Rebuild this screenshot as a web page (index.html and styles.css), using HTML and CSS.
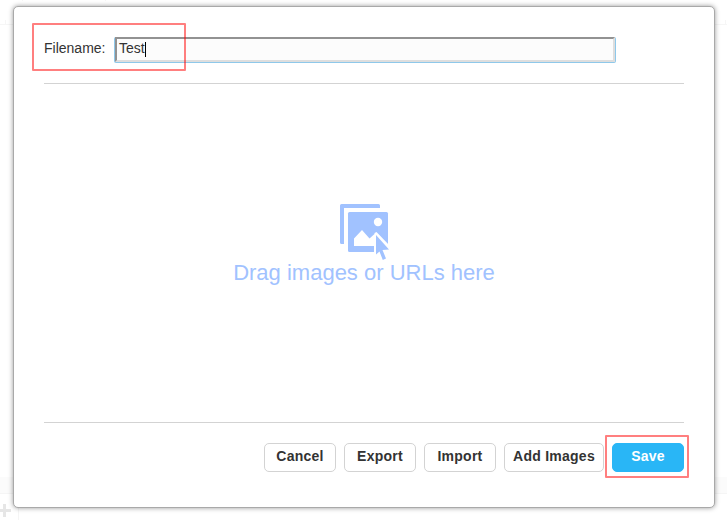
FILE: index.html
```
<!DOCTYPE html>
<html lang="en">
<head>
<meta charset="utf-8">
<title>Test</title>
<link rel="stylesheet" href="styles.css">
</head>
<body>
<svg class="backdrop" width="727" height="520" aria-hidden="true">
  <path d="M0 24.500H13M715 24.500h12M5.500 20v4M725.500 20v4M22.500 0v1M105.500 0v1" stroke="#f6f6f6"/>
  <path d="M0 477h727v16H0z" fill="#fbfbfb"/>
  <path d="M0 493.500H727M18.500 494v26" stroke="#f5f5f5"/>
  <path d="M-2 510.500H11M4.500 504v13" stroke="#e6e6e6" stroke-width="3"/>
</svg>
<main class="dialog">
  <div class="file-row">
    <label>Filename:</label>
    <div class="field" role="textbox"><span>Test</span><i class="caret"></i></div>
    <span class="highlight highlight-name"></span>
  </div>
  <section class="drop">
    <svg width="50" height="58" viewBox="0 0 50 58" aria-hidden="true">
      <path fill="#a1c2ff" d="M1.500 0H38.500Q40 0 40 1.500V4H4V40H1.500Q0 40 0 38.500V1.500Q0 0 1.500 0z"/>
      <rect x="8" y="8" width="40" height="40" rx="1.500" fill="#a1c2ff"/>
      <circle cx="38" cy="18" r="4.200" fill="#fff"/>
      <path d="M14 42v-7.500L22 26l7.500 8.500 5-4.500V29l2-1L50 42v8H34v-8z" fill="#fff"/>
      <path d="M36 31L49 45.500 42.500 46 46 54.500 42.800 56 39.500 47.500 36 50.500z" fill="#a1c2ff"/>
    </svg>
    <p>Drag images or URLs here</p>
  </section>
  <footer class="actions">
    <button>Cancel</button>
    <button>Export</button>
    <button>Import</button>
    <button class="wide">Add Images</button>
    <span class="save-wrap"><button class="primary">Save</button><span class="highlight highlight-save"></span></span>
  </footer>
</main>
</body>
</html>
```
FILE: styles.css
```
* { box-sizing: border-box; }
body {
  margin: 0;
  width: 727px;
  height: 520px;
  padding: 6px 12px 12px 13px;
  overflow: hidden;
  background: #fff;
  color: #333;
  font: 14px/16px "Liberation Sans", Arial, sans-serif;
}
.backdrop { position: absolute; left: 0; top: 0; z-index: -1; }
.dialog {
  display: flex;
  flex-direction: column;
  height: 502px;
  padding: 30px;
  border: 1px solid #a9a9a9;
  border-radius: 5px;
  background: #fff;
  box-shadow: 0 0 5px rgba(0, 0, 0, .4);
}
.file-row {
  position: relative;
  display: flex;
  align-items: flex-start;
  height: 47px;
  border-bottom: 1px solid #d3d3d3;
}
.file-row label { width: 71px; padding-top: 3px; }
.field {
  display: flex;
  width: 500px;
  height: 25px;
  padding-left: 2px;
  border: 2px solid;
  border-color: #929292 #dedede #dedede #929292;
  background: #fcfcfc;
  box-shadow: 0 0 0 1px #8ec8ea;
  clip-path: inset(0 -1px -1px -1px round 2px);
  line-height: 18px;
}
.caret { width: 1px; height: 15px; margin-top: 3px; background: #000; }
.highlight {
  position: absolute;
  border: 2px solid rgba(255, 0, 0, .5);
  border-radius: 1px;
  pointer-events: none;
}
.highlight-name { left: -12px; top: -14px; width: 154px; height: 48px; }
.drop {
  flex: 1;
  display: flex;
  flex-direction: column;
  align-items: center;
  padding-top: 120px;
  border-bottom: 1px solid #d3d3d3;
  color: #a1c2ff;
}
.drop svg { margin-left: 2px; }
.drop p { margin: -2px 0 0; font-size: 22px; line-height: 26px; }
.actions { display: flex; justify-content: flex-end; gap: 8px; padding-top: 20px; height: 54px; }
button {
  width: 72px;
  height: 29px;
  padding: 0 0 3px;
  border: 1px solid #d3d3d3;
  border-radius: 5px;
  background: #fff;
  color: #333;
  font: bold 14px/16px "Liberation Sans", Arial, sans-serif;
  letter-spacing: .25px;
}
.wide { width: 100px; }
.primary { border-color: #29b6f6; background: #29b6f6; color: #fff; }
.save-wrap { position: relative; height: 29px; }
.highlight-save { left: -7px; top: -8px; width: 84px; height: 43px; }
```
